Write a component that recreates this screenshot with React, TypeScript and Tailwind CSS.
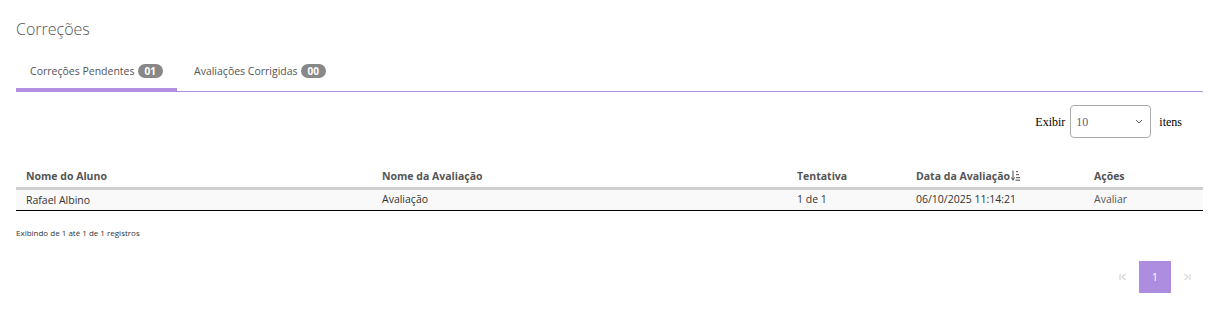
import React from "react";

function SortIcon() {
  return (
    <svg width="9" height="11" viewBox="0 0 9 11" className="ml-[1px] inline-block align-[-1px]">
      <path d="M2 0.5 V9.5" stroke="#666" strokeWidth="1.2" />
      <path d="M0.3 7.5 L2 10 L3.7 7.5" stroke="#666" strokeWidth="1.1" fill="none" />
      <rect x="5" y="1" width="2" height="1.2" fill="#666" />
      <rect x="5" y="4" width="3" height="1.2" fill="#666" />
      <rect x="5" y="7" width="4" height="1.2" fill="#666" />
      <rect x="4.5" y="9.6" width="4.5" height="1.2" fill="#666" />
    </svg>
  );
}

function FirstIcon() {
  return (
    <svg width="8" height="8" viewBox="0 0 8 8">
      <path d="M1 1 V7" stroke="#d6d6d6" strokeWidth="1.2" />
      <path d="M6.5 1 L3 4 L6.5 7" stroke="#d6d6d6" strokeWidth="1.2" fill="none" />
    </svg>
  );
}

function LastIcon() {
  return (
    <svg width="8" height="8" viewBox="0 0 8 8">
      <path d="M7 1 V7" stroke="#d6d6d6" strokeWidth="1.2" />
      <path d="M1.5 1 L5 4 L1.5 7" stroke="#d6d6d6" strokeWidth="1.2" fill="none" />
    </svg>
  );
}

export default function App() {
  return (
    <div className="w-[1216px] h-[310px] bg-white pl-4 pr-[13px] font-['Open_Sans',sans-serif] text-[#555]">
      <h1 className="pt-[18px] text-[16px] font-light leading-[22px] text-[#555]">Correções</h1>

      <div className="mt-[23px] flex border-b-[1.5px] border-[#b18fe3]">
        <div className="mb-[-1.5px] flex h-[28px] w-[161px] items-start justify-center border-b-[3px] border-[#b18fe3] pt-[1px]">
          <span className="text-[10.5px] leading-[14px] text-[#555]">Correções Pendentes</span>
          <span className="ml-[3px] flex h-[14px] items-center rounded-full bg-[#888] px-[7px] text-[10px] font-bold leading-none text-white">01</span>
        </div>
        <div className="flex h-[28px] items-start pl-[17px] pt-[1px]">
          <span className="text-[10.5px] leading-[14px] text-[#555]">Avaliações Corrigidas</span>
          <span className="ml-[3px] flex h-[14px] items-center rounded-full bg-[#888] px-[7px] text-[10px] font-bold leading-none text-white">00</span>
        </div>
      </div>

      <div className="mt-[13px] flex items-center justify-end pr-[21px] font-['Liberation_Serif',serif] text-[12px] text-black">
        <span>Exibir</span>
        <div className="ml-[5px] flex h-[33px] w-[81px] items-center justify-between rounded-[4px] border border-[#aaa] px-[5px]">
          <span className="text-[12px] text-[#6b5a6e]">10</span>
          <svg width="8" height="5" viewBox="0 0 8 5" className="mr-[2px]">
            <path d="M1 1 L4 4 L7 1" stroke="#666" strokeWidth="1" fill="none" />
          </svg>
        </div>
        <span className="ml-[8px]">itens</span>
      </div>

      <table className="mt-[30px] w-full border-collapse text-[10.5px]">
        <thead>
          <tr className="border-b-[3px] border-[#d0d0d0] text-left">
            <th className="w-[356px] px-[10px] pb-[3px] pt-0 font-bold leading-[16px] text-[#555]">Nome do Aluno</th>
            <th className="w-[415px] px-[10px] pb-[3px] font-bold leading-[16px] text-[#555]">Nome da Avaliação</th>
            <th className="w-[119px] px-[10px] pb-[3px] font-bold leading-[16px] text-[#555]">Tentativa</th>
            <th className="w-[178px] px-[10px] pb-[3px] font-bold leading-[16px] text-[#555]">
              Data da Avaliação<SortIcon />
            </th>
            <th className="px-[10px] pb-[3px] font-bold leading-[16px] text-[#555]">Ações</th>
          </tr>
        </thead>
        <tbody>
          <tr className="border-b-[1.5px] border-black bg-[#f9f9f9] text-[#333]">
            <td className="h-[22px] px-[10px] pb-[1px] leading-[16px]">Rafael Albino</td>
            <td className="px-[10px] pb-[1px]">Avaliação</td>
            <td className="px-[10px] pb-[1px]">1 de 1</td>
            <td className="px-[10px] pb-[1px]">06/10/2025 11:14:21</td>
            <td className="px-[10px] pb-[1px] text-[#555]">Avaliar</td>
          </tr>
        </tbody>
      </table>

      <div className="mt-[16px] text-[8px] leading-[12px] text-[#333]">Exibindo de 1 até 1 de 1 registros</div>

      <div className="mt-[22px] flex items-center justify-end">
        <div className="flex h-[32px] w-[32px] items-center justify-center">
          <FirstIcon />
        </div>
        <div className="flex h-[32px] w-[32px] items-center justify-center bg-[#ac8ddf] text-[11px] text-white">1</div>
        <div className="flex h-[32px] w-[32px] items-center justify-center">
          <LastIcon />
        </div>
      </div>
    </div>
  );
}
